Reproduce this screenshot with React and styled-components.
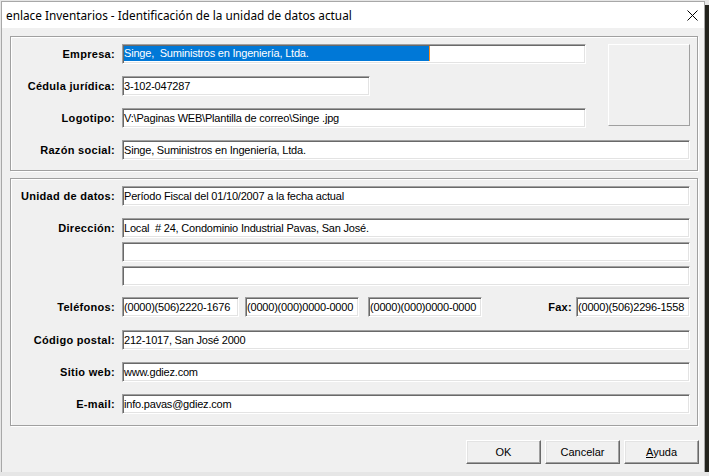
import React from "react";
import styled, { createGlobalStyle } from "styled-components";

const GlobalStyle = createGlobalStyle`
  html, body {
    margin: 0;
    padding: 0;
    background: #e6e6e6;
    overflow: hidden;
  }
  body {
    font-family: "Liberation Sans", Arial, sans-serif;
    font-size: 11px;
    color: #000;
  }
`;

const Window = styled.div`
  width: 702px;
  height: 470px;
  margin: 2px 0 0 2px;
  background: #f0f0f0;
  display: flex;
  flex-direction: column;
  box-shadow: 0 0 0 1px #a8a8a8, 5px 4px 0 1px #23231d;
`;

const TitleBar = styled.div`
  height: 26px;
  flex: none;
  background: #fff;
  display: flex;
  align-items: center;
  justify-content: space-between;
  padding: 0 6px 0 4px;
  font-family: "Noto Sans", "Open Sans", sans-serif;
  font-size: 11.8px;
`;

const Client = styled.div`
  flex: 1;
  display: flex;
  flex-direction: column;
  padding: 8px 6px 0 8px;
`;

const GroupBox = styled.div`
  border: 1px solid #a0a0a0;
  box-shadow: inset 1px 1px 0 #fff, 1px 1px 0 #fff;
  margin-top: ${({ $top }) => $top || 0}px;
`;

const CompanyGrid = styled(GroupBox)`
  display: grid;
  grid-template-columns: 104px 464px 1fr;
  grid-template-rows: repeat(4, 20px);
  column-gap: 7px;
  row-gap: 12px;
  padding: 7px 7px 10px 0;
`;

const DataGroup = styled(GroupBox)`
  display: flex;
  flex-direction: column;
  padding: 7px 7px 11px 0;
`;

const Row = styled.div`
  display: flex;
  align-items: center;
  height: 20px;
  margin-top: ${({ $gap }) => $gap || 0}px;
`;

const Label = styled.div`
  width: ${({ $width }) => $width || 104}px;
  flex: ${({ $grow }) => ($grow ? 1 : "none")};
  margin-right: ${({ $grow }) => ($grow ? 4 : 7)}px;
  text-align: right;
  font-weight: bold;
  letter-spacing: 0.3px;
  line-height: 20px;
  white-space: nowrap;
`;

const Field = styled.div`
  box-sizing: border-box;
  height: 20px;
  width: ${({ $width }) => ($width ? `${$width}px` : "auto")};
  flex: ${({ $width }) => ($width ? "none" : 1)};
  margin-right: ${({ $after }) => $after || 0}px;
  grid-column: ${({ $span }) => ($span ? "2 / 4" : "auto")};
  background: #fff;
  border-style: solid;
  border-width: 1px;
  border-color: #a0a0a0 #fff #fff #a0a0a0;
  box-shadow: inset 1px 1px 0 #696969, inset -1px -1px 0 #e3e3e3;
  padding: 0 1px;
  line-height: 18px;
  letter-spacing: -0.2px;
  white-space: nowrap;
  overflow: hidden;
`;

const Selected = styled.span`
  display: inline-block;
  width: 305px;
  height: 15px;
  line-height: 15px;
  margin-top: 1px;
  vertical-align: top;
  background: #0078d7;
  color: #fff;
  border-right: 1px solid #ff8c1a;
`;

const LogoBox = styled.div`
  grid-column: 3;
  grid-row: 1 / 4;
  justify-self: end;
  align-self: start;
  width: 82px;
  height: 82px;
  box-sizing: border-box;
  border-style: solid;
  border-width: 1px;
  border-color: #fff #a0a0a0 #a0a0a0 #fff;
`;

const ButtonBar = styled.div`
  display: flex;
  justify-content: flex-end;
  gap: 4px;
  margin: 14px -1px 0 0;
`;

const Button = styled.button`
  width: 75px;
  height: 24px;
  box-sizing: border-box;
  padding: 0;
  background: #f0f0f0;
  font-family: "Liberation Sans", Arial, sans-serif;
  font-size: 11px;
  color: #000;
  border-style: solid;
  border-width: 1px;
  border-color: #fff #696969 #696969 #fff;
  box-shadow: inset -1px -1px 0 #a0a0a0, inset 1px 1px 0 #e3e3e3;

  u {
    text-decoration: underline;
  }
`;

const CloseIcon = () => (
  <svg width="11" height="11" viewBox="0 0 11 11">
    <path d="M0.5 0.5 L10.5 10.5 M10.5 0.5 L0.5 10.5" stroke="#000" strokeWidth="1" />
  </svg>
);

export default function App() {
  return (
    <>
      <GlobalStyle />
      <Window>
        <TitleBar>
          <span>enlace Inventarios - Identificación de la unidad de datos actual</span>
          <CloseIcon />
        </TitleBar>
        <Client>
          <CompanyGrid>
            <Label>Empresa:</Label>
            <Field>
              <Selected>Singe,&nbsp; Suministros en Ingeniería, Ltda.</Selected>
            </Field>
            <LogoBox />
            <Label>Cédula jurídica:</Label>
            <div>
              <Field $width={248}>3-102-047287</Field>
            </div>
            <Label>Logotipo:</Label>
            <Field>V:\Paginas WEB\Plantilla de correo\Singe .jpg</Field>
            <Label>Razón social:</Label>
            <Field $span>Singe, Suministros en Ingeniería, Ltda.</Field>
          </CompanyGrid>

          <DataGroup $top={7}>
            <Row>
              <Label>Unidad de datos:</Label>
              <Field>Período Fiscal del 01/10/2007 a la fecha actual</Field>
            </Row>
            <Row $gap={12}>
              <Label>Dirección:</Label>
              <Field>Local&nbsp; # 24, Condominio Industrial Pavas, San José.</Field>
            </Row>
            <Row $gap={4}>
              <Label />
              <Field />
            </Row>
            <Row $gap={4}>
              <Label />
              <Field />
            </Row>
            <Row $gap={11}>
              <Label>Teléfonos:</Label>
              <Field $width={117} $after={6}>(0000)(506)2220-1676</Field>
              <Field $width={114} $after={9}>(0000)(000)0000-0000</Field>
              <Field $width={114}>(0000)(000)0000-0000</Field>
              <Label $grow>Fax:</Label>
              <Field $width={114}>(0000)(506)2296-1558</Field>
            </Row>
            <Row $gap={13}>
              <Label>Código postal:</Label>
              <Field>212-1017, San José 2000</Field>
            </Row>
            <Row $gap={12}>
              <Label>Sitio web:</Label>
              <Field>www.gdiez.com</Field>
            </Row>
            <Row $gap={12}>
              <Label>E-mail:</Label>
              <Field>info.pavas@gdiez.com</Field>
            </Row>
          </DataGroup>

          <ButtonBar>
            <Button>OK</Button>
            <Button>Cancelar</Button>
            <Button>
              <u>A</u>yuda
            </Button>
          </ButtonBar>
        </Client>
      </Window>
    </>
  );
}
